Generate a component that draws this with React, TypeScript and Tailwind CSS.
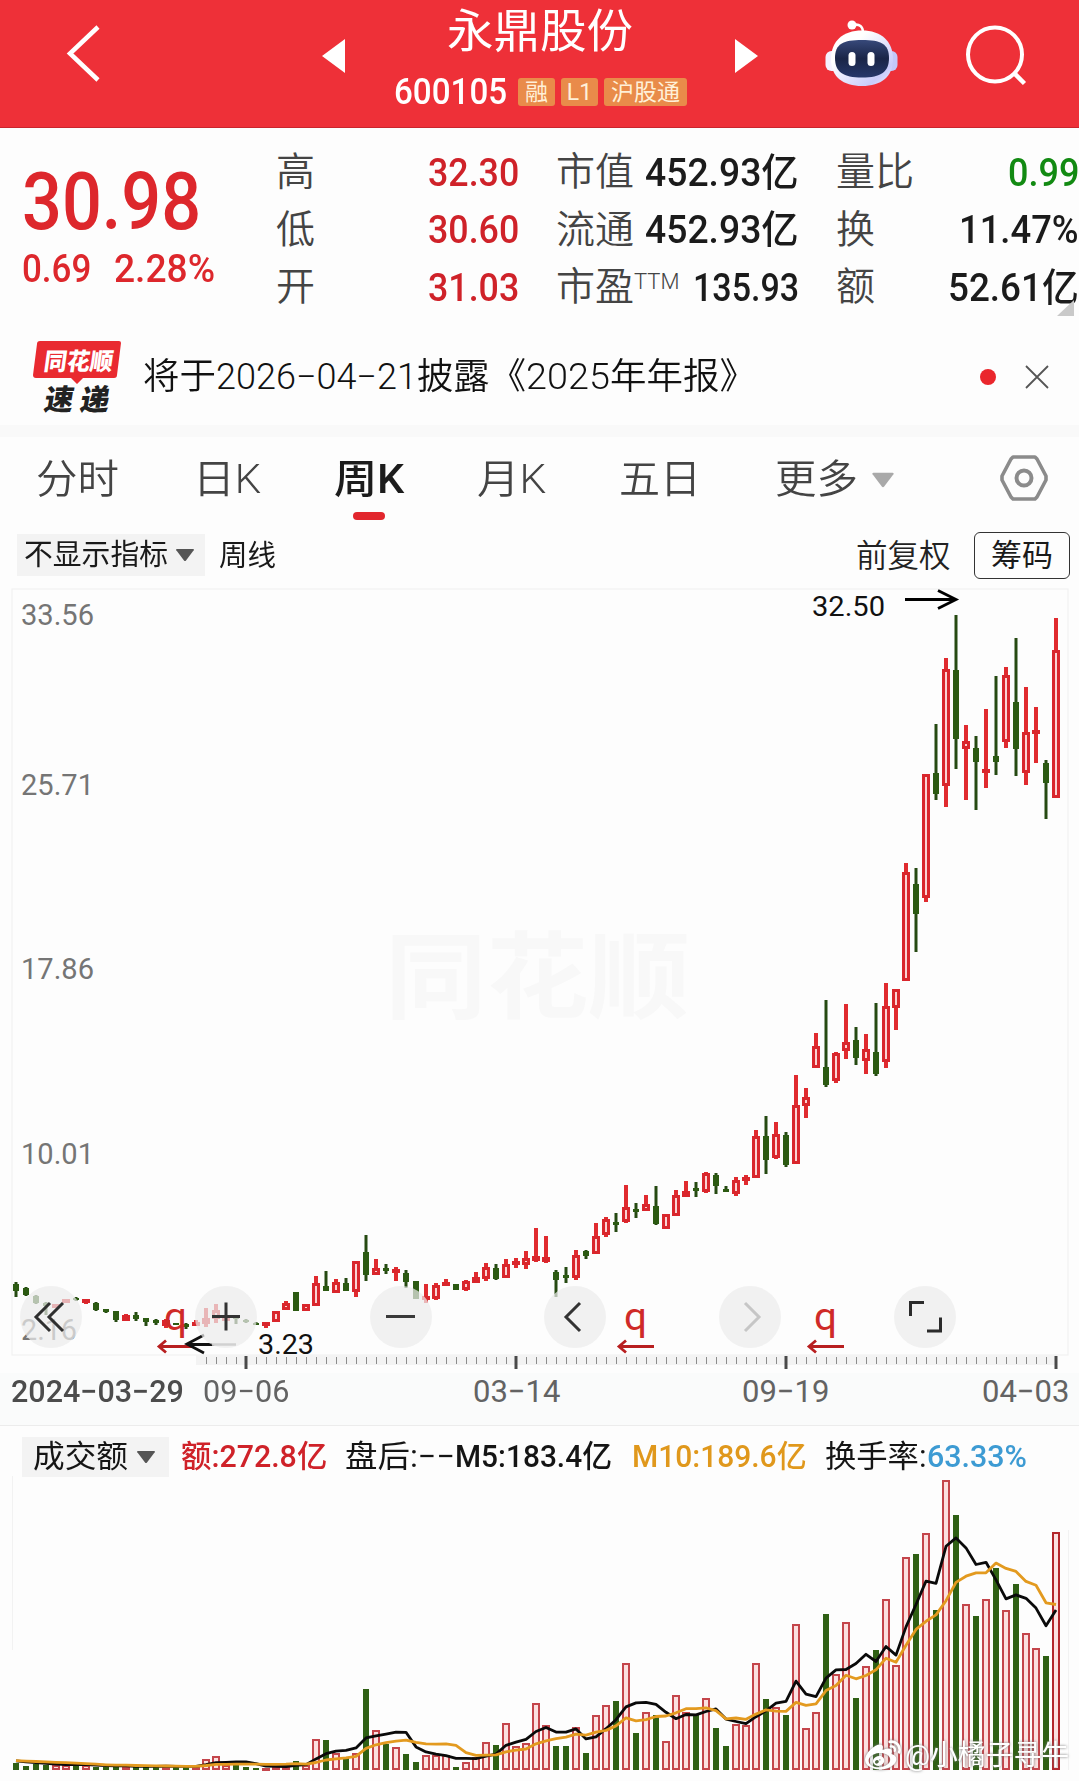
import { ReactNode, useLayoutEffect, useRef, useState } from "react";
import { FaWeibo } from "react-icons/fa";

type Candle = [up: number, high: number, top: number, bottom: number, low: number];

const RED = "#d9262c";
const GREEN = "#2c5a12";

// one entry per week: direction, high, body top, body bottom, low (chart space)
const candles: Candle[] = [
  [0, 1282, 1284, 1291, 1297], [0, 1287, 1288, 1295, 1296], [0, 1295, 1296, 1303, 1304], [0, 1302, 1303, 1306, 1315],
  [1, 1304, 1304, 1307, 1308], [1, 1299, 1299, 1303, 1303], [0, 1297, 1298, 1300, 1301], [1, 1299, 1299, 1302, 1304],
  [0, 1302, 1303, 1310, 1311], [0, 1309, 1309, 1312, 1313], [0, 1311, 1311, 1320, 1322], [1, 1314, 1315, 1321, 1321],
  [0, 1312, 1315, 1319, 1321], [0, 1318, 1318, 1322, 1326], [0, 1319, 1320, 1323, 1325], [1, 1319, 1320, 1326, 1328],
  [0, 1323, 1323, 1325, 1325], [0, 1323, 1324, 1327, 1329], [1, 1320, 1322, 1325, 1325], [1, 1308, 1318, 1324, 1327],
  [1, 1304, 1310, 1319, 1323], [1, 1316, 1317, 1318, 1320], [0, 1317, 1317, 1319, 1324], [0, 1319, 1320, 1322, 1323],
  [0, 1322, 1323, 1325, 1325], [1, 1322, 1322, 1325, 1328], [1, 1311, 1311, 1322, 1322], [1, 1301, 1303, 1310, 1310],
  [0, 1292, 1292, 1311, 1311], [1, 1304, 1304, 1311, 1311], [1, 1276, 1283, 1306, 1306], [0, 1271, 1286, 1291, 1291],
  [1, 1279, 1282, 1293, 1293], [0, 1278, 1283, 1291, 1291], [1, 1261, 1261, 1292, 1297], [0, 1235, 1252, 1275, 1281],
  [1, 1259, 1268, 1275, 1275], [0, 1264, 1268, 1271, 1274], [1, 1267, 1269, 1273, 1281], [0, 1270, 1273, 1282, 1288],
  [0, 1281, 1281, 1299, 1299], [1, 1284, 1296, 1300, 1303], [1, 1283, 1285, 1299, 1300], [1, 1279, 1282, 1286, 1286],
  [0, 1284, 1284, 1290, 1290], [1, 1280, 1281, 1290, 1291], [1, 1272, 1277, 1283, 1283], [1, 1263, 1267, 1279, 1281],
  [0, 1264, 1268, 1279, 1280], [1, 1259, 1264, 1278, 1278], [1, 1258, 1261, 1265, 1268], [1, 1251, 1258, 1265, 1269],
  [1, 1228, 1256, 1261, 1262], [1, 1236, 1257, 1262, 1263], [0, 1270, 1272, 1280, 1297], [0, 1267, 1275, 1278, 1283],
  [1, 1250, 1255, 1278, 1280], [0, 1250, 1251, 1256, 1259], [1, 1223, 1236, 1254, 1254], [1, 1217, 1219, 1235, 1237],
  [0, 1213, 1222, 1225, 1232], [1, 1185, 1207, 1222, 1223], [0, 1203, 1209, 1212, 1218], [1, 1195, 1204, 1211, 1211],
  [0, 1186, 1206, 1224, 1225], [1, 1214, 1214, 1229, 1229], [1, 1190, 1195, 1216, 1216], [1, 1181, 1191, 1197, 1197],
  [0, 1182, 1188, 1191, 1197], [1, 1172, 1173, 1192, 1193], [0, 1173, 1175, 1186, 1194], [0, 1186, 1189, 1192, 1192],
  [1, 1177, 1180, 1194, 1196], [1, 1175, 1177, 1181, 1185], [1, 1130, 1136, 1178, 1178], [0, 1116, 1136, 1160, 1174],
  [1, 1122, 1134, 1158, 1159], [0, 1132, 1135, 1165, 1167], [1, 1075, 1105, 1164, 1164], [1, 1088, 1097, 1106, 1118],
  [1, 1033, 1046, 1068, 1068], [0, 1000, 1067, 1085, 1087], [1, 1052, 1053, 1081, 1083], [1, 1004, 1042, 1051, 1059],
  [0, 1027, 1040, 1058, 1065], [1, 1034, 1049, 1061, 1074], [0, 1003, 1052, 1074, 1076], [1, 983, 1006, 1062, 1068],
  [1, 989, 989, 1008, 1030], [1, 863, 872, 981, 981], [0, 868, 884, 914, 952], [1, 774, 774, 898, 902],
  [0, 724, 773, 794, 800], [1, 658, 669, 786, 807], [0, 615, 670, 739, 769], [1, 725, 741, 749, 800],
  [0, 736, 748, 762, 810], [1, 709, 769, 773, 788], [0, 676, 756, 762, 775], [1, 667, 675, 742, 748],
  [0, 638, 702, 749, 776], [1, 687, 732, 773, 785], [1, 707, 730, 734, 763], [0, 760, 763, 783, 819],
  [1, 618, 650, 798, 798],
];

const volumes = [
  7, 4, 6, 5, 5, 5, 4, 5, 3, 3, 3, 4, 3, 3, 3, 4, 3, 3, 3, 11, 14, 5, 5, 3, 2, 2, 4, 4, 9, 5, 31, 30, 17, 13, 17, 81,
  40, 26, 23, 16, 8, 15, 15, 15, 3, 8, 13, 28, 25, 47, 24, 27, 67, 45, 24, 24, 43, 17, 55, 65, 69, 107, 37, 58, 55,
  29, 75, 58, 56, 72, 42, 24, 46, 45, 107, 71, 63, 55, 146, 42, 58, 156, 96, 148, 72, 104, 120, 171, 105, 213, 216,
  237, 160, 290, 255, 166, 154, 171, 202, 160, 186, 137, 122, 114, 238,
];

const cx = (i: number) => 16 + i * 10;

const movingAverage = (span: number) =>
  volumes
    .map((_, i) => {
      let sum = 0;
      for (let k = i - span + 1; k <= i; k++) sum += k < 0 ? 9 : volumes[k];
      return `${cx(i)},${(1769.5 - sum / span).toFixed(1)}`;
    })
    .join(" ");

// squeezes its text to a fixed width, the way the condensed numerals are set
const Fit = ({ w, className = "", children }: { w: number; className?: string; children: ReactNode }) => {
  const ref = useRef<HTMLSpanElement>(null);
  const [scale, setScale] = useState(1);
  useLayoutEffect(() => {
    if (ref.current) setScale(w / ref.current.offsetWidth);
  }, [w]);
  return (
    <span className={`inline-flex shrink-0 ${className}`} style={{ width: w }}>
      <span
        ref={ref}
        className="inline-block shrink-0 origin-left whitespace-nowrap"
        style={{ transform: `scaleX(${scale})` }}
      >
        {children}
      </span>
    </span>
  );
};

const Caret = ({ className }: { className: string }) => (
  <svg viewBox="0 0 20 14" className={className} fill="currentColor">
    <path d="M2 1h16q1.500 0 .7 1.300L11 12.500q-1 1.200-2 0L1.300 2.300Q.5 1 2 1z" />
  </svg>
);

const Robot = () => (
  <svg viewBox="0 0 74 70" className="h-[70px] w-[74px]">
    <defs>
      <linearGradient id="shell" x1="0" y1="0" x2="1" y2="1">
        <stop offset="0.3" stopColor="#fff" />
        <stop offset="0.8" stopColor="#c9ccfa" />
        <stop offset="1" stopColor="#eef" />
      </linearGradient>
      <linearGradient id="visor" x1="0" y1="0" x2="0" y2="1">
        <stop offset="0" stopColor="#37497a" />
        <stop offset="0.5" stopColor="#1a2547" />
        <stop offset="1" stopColor="#26376a" />
      </linearGradient>
    </defs>
    <path d="M28 6Q38 4 38 14" stroke="#fff" strokeWidth="2.600" fill="none" />
    <circle cx="27" cy="6" r="4.500" fill="#fff" />
    <rect x="0.500" y="32" width="14" height="20" rx="6" fill="#f4f1ff" />
    <rect x="58.500" y="32" width="14" height="20" rx="6" fill="#c3c8f8" />
    <path d="M37 11.500C56 11.500 68 22 68 40S56 67 37 67 6 58 6 40 18 11.500 37 11.500z" fill="url(#shell)" />
    <path d="M37 21C56 21 64 25 64 39S56 58.500 37 58.500 10 53 10 39 18 21 37 21z" fill="url(#visor)" />
    <rect x="23.500" y="33" width="7" height="14" rx="3.500" fill="#fff" />
    <rect x="42.500" y="33" width="7" height="14" rx="3.500" fill="#fff" />
  </svg>
);

const Header = () => (
  <header className="flex h-32 border-b border-[#c9252d] bg-[#ee3038] text-white">
    <svg viewBox="0 0 360 127" className="h-[127px] w-[360px] shrink-0">
      <path d="M98 27L70 53.500L98 80" fill="none" stroke="#fff" strokeWidth="4.500" />
      <path d="M322 56L345 39V73z" fill="#fff" />
    </svg>
    <div className="flex w-[360px] shrink-0 flex-col items-center">
      <div className="flex h-[61px] items-center">
        <Fit w={186} className="text-[46px] leading-none">永鼎股份</Fit>
      </div>
      <div className="flex h-[63px] w-[292px] items-center gap-[6px] pb-px">
        <Fit w={113} className="mr-[5px] text-[37px] font-medium leading-[60px]">600105</Fit>
        {[
          ["融", "w-[37px]"],
          ["L1", "w-[37px]"],
          ["沪股通", "w-[83px]"],
        ].map(([name, width]) => (
          <span
            key={name}
            className={`flex h-7 ${width} shrink-0 items-center justify-center rounded-[3px] bg-[#e98b4a] text-[23px] leading-none text-[#fff0d8]`}
          >
            {name}
          </span>
        ))}
      </div>
    </div>
    <svg viewBox="720 0 105 127" className="h-[127px] w-[105px] shrink-0">
      <path d="M758 56L735 39V73z" fill="#fff" />
    </svg>
    <div className="w-[140px] shrink-0 pt-[19px]">
      <Robot />
    </div>
    <svg viewBox="965 0 114 127" className="h-[127px] w-[114px] shrink-0">
      <circle cx="995" cy="54.500" r="27" fill="none" stroke="#fff" strokeWidth="4" />
      <path d="M1014 73L1024.500 83.500" stroke="#fff" strokeWidth="4.500" />
    </svg>
  </header>
);

type Stat = { label: ReactNode; value: string; w: number; color?: string };

const stats: Stat[][] = [
  [
    { label: "高", value: "32.30", w: 91, color: "text-[#cf2229]" },
    { label: "低", value: "30.60", w: 91, color: "text-[#cf2229]" },
    { label: "开", value: "31.03", w: 91, color: "text-[#cf2229]" },
  ],
  [
    { label: "市值", value: "452.93亿", w: 154 },
    { label: "流通", value: "452.93亿", w: 154 },
    { label: <>市盈<sup className="top-[-11px] text-[22px] leading-none">TTM</sup></>, value: "135.93", w: 106 },
  ],
  [
    { label: "量比", value: "0.99", w: 71, color: "text-[#128a12]" },
    { label: "换", value: "11.47%", w: 120 },
    { label: "额", value: "52.61亿", w: 131 },
  ],
];

const Quote = () => (
  <section className="flex h-[192px] pt-[16px]">
    <div className="w-[276px] shrink-0 pl-[22px] text-[#dd272c]">
      <Fit w={179} className="mt-[3px] text-[80px] font-medium leading-[110px]">30.98</Fit>
      <div className="flex gap-[23px] text-[39px] font-medium leading-[24px]">
        <Fit w={69}>0.69</Fit>
        <Fit w={101}>2.28%</Fit>
      </div>
    </div>
    {stats.map((column, i) => (
      <div key={i} className="relative mr-[37px] w-[243px] shrink-0 last:mr-0">
        {column.map(({ label, value, w, color = "text-[#1b1b1b]" }) => (
          <div key={value + w + String(i)} className="flex h-[57.500px] items-center justify-between">
            <span className="text-[39px] font-[350] leading-none text-[#444]">{label}</span>
            <Fit w={w} className={`text-[38.500px] font-medium leading-none ${color}`}>{value}</Fit>
          </div>
        ))}
        {i === 2 && <span className="absolute right-[5px] bottom-[4px] border-b-[16px] border-l-[17px] border-b-[#c9c9c9] border-l-transparent" />}
      </div>
    ))}
  </section>
);

const News = () => (
  <section className="box-content flex h-[97px] items-center border-b-12 border-[#f9f9f9] pt-[8px]">
    <div className="ml-[33px] w-[110px] shrink-0">
      <svg viewBox="33 332 90 88" className="h-[88px] w-[90px]">
        <path d="M40 340H119Q121 340 121 342L117 374Q117 377 114 377H83L77 383L71 377H36Q33 377 33 374L37 343Q37 340 40 340z" fill="#e92a30" />
        <g fontWeight="900" fontFamily="Noto Sans CJK SC, sans-serif">
          <text transform="translate(43 369) skewX(-8)" fontSize="24" textLength="69" lengthAdjust="spacingAndGlyphs" fill="#fff">同花顺</text>
          <text transform="translate(43 409) skewX(-10)" fontSize="29" textLength="65" fill="#222">速递</text>
        </g>
      </svg>
    </div>
    <p className="flex items-center text-[36px] font-[350] leading-none text-[#111]">
      <Fit w={73}>将于</Fit>
      <Fit w={201}>2026−04−21</Fit>
      <Fit w={109}>披露《</Fit>
      <Fit w={84}>2025</Fit>
      <Fit w={146}>年年报》</Fit>
    </p>
    <span className="ml-[224px] h-4 w-4 shrink-0 rounded-full bg-[#ea262c]" />
    <svg viewBox="0 0 24 24" className="ml-[29px] h-6 w-6 shrink-0" stroke="#555" strokeWidth="1.800">
      <path d="M1 1L23 23M23 1L1 23" />
    </svg>
  </section>
);

const Tabs = () => (
  <nav className="flex h-[90px] items-center pb-[5px] text-[40px] font-[350] leading-none text-[#444]">
    <Fit w={83} className="ml-[36px]">分时</Fit>
    <Fit w={68} className="ml-[74px]">日K</Fit>
    <div className="relative ml-[73px] flex">
      <Fit w={70} className="font-medium text-[#1c1c1c]">周K</Fit>
      <span className="absolute top-[52px] left-[19px] h-2 w-8 rounded-full bg-[#e2262d]" />
    </div>
    <Fit w={69} className="ml-[73px]">月K</Fit>
    <Fit w={82} className="ml-[73px]">五日</Fit>
    <Fit w={83} className="ml-[74px]">更多</Fit>
    <Caret className="ml-[13px] h-[18px] w-[24px] text-[#a9a9a9]" />
    <svg viewBox="0 0 48 46" className="mb-[3px] ml-[105px] h-[46px] w-[48px]" fill="none" stroke="#8b8b8b" strokeWidth="3.600" strokeLinejoin="round">
      <path d="M13 2H35L37 4L46 21V25L37 42L35 44H13L11 42L2 25V21L11 4z" />
      <circle cx="24" cy="23" r="7.500" strokeWidth="4" />
    </svg>
  </nav>
);

const Toolbar = () => (
  <div className="flex h-[56px] items-center leading-none text-[#1a1a1a]">
    <button className="ml-[17px] flex h-[42px] w-[188px] items-center gap-[7px] bg-[#f3f3f3] pl-[7px]">
      <Fit w={144} className="pt-px text-[29px]">不显示指标</Fit>
      <Caret className="h-[14px] w-[20px] text-[#555]" />
    </button>
    <Fit w={57} className="ml-[14px] pt-[2px] text-[29px]">周线</Fit>
    <Fit w={95} className="ml-[580px] pt-[4px] text-[31.500px] font-[350] text-[#222]">前复权</Fit>
    <button className="ml-[23px] flex h-[47px] w-[96px] items-center justify-center rounded-[6px] border-[1.500px] border-[#333]">
      <Fit w={62} className="text-[31px]">筹码</Fit>
    </button>
  </div>
);

const Mark = ({ x }: { x: number }) => (
  <g>
    <text x={x + 6} y="1330" fontSize="39" fill="#cf2a28" textLength="23" lengthAdjust="spacingAndGlyphs">q</text>
    <path d={`M${x + 36} 1346.500H${x + 1}M${x + 8} 1340.500L${x + 1} 1346.500L${x + 8} 1352.500`} fill="none" stroke="#b81f20" strokeWidth="2.800" />
  </g>
);

const axis: [string, number][] = [["33.56", 625], ["25.71", 795], ["17.86", 979], ["10.01", 1164], ["2.16", 1340]];

const controls: { name: string; d: string; color: string }[] = [
  { name: "first", d: "M31 18L17 32L31 46M44 18L30 32L44 46", color: "#2f2f2f" },
  { name: "zoom in", d: "M18 31.500H46M32 17.500V45.500", color: "#333" },
  { name: "zoom out", d: "M17 31.500H46", color: "#3a3a3a" },
  { name: "previous", d: "M37 18L23 32L37 46", color: "#333" },
  { name: "next", d: "M27 18L41 32L27 46", color: "#c6c6c6" },
  { name: "full screen", d: "M17.500 31V17.500H31M34 46H47.500V32.500", color: "#2b2b2b" },
];

const PriceChart = () => (
  <section className="relative">
    <svg viewBox="0 583 1079 790" className="block h-[790px] w-[1079px]">
      <rect x="12" y="589" width="1056" height="766" fill="none" stroke="#efefef" strokeWidth="1" />
      <text x="385" y="1011" fontSize="94" fontWeight="700" fill="#f8f8f8" textLength="305" lengthAdjust="spacingAndGlyphs">同花顺</text>
      {axis.map(([label, y]) => (
        <text key={label} x="21" y={y} fontSize="29" fill="#757575" textLength={label.length === 5 ? 73 : 56} lengthAdjust="spacingAndGlyphs">{label}</text>
      ))}
      <rect x="196" y="1355" width="861" height="10" fill="#f3f3f3" />
      {candles.map(([up, high, top, bottom, low], i) =>
        up ? (
          <g key={i}>
            <rect x={cx(i) - 2} y={high} width="4" height={low - high} fill="#e02b2f" />
            <rect
              x={cx(i) - 2.5}
              y={top + 1.5}
              width="5"
              height={Math.max(1, bottom - top - 3)}
              fill={bottom - top > 6 ? "#fbd3d3" : RED}
              stroke={RED}
              strokeWidth="3"
            />
          </g>
        ) : (
          <g key={i}>
            <rect x={cx(i) - 1.5} y={high} width="3" height={low - high} fill="#264a12" />
            <rect x={cx(i) - 3} y={top} width="6" height={bottom - top} fill={GREEN} />
          </g>
        ),
      )}
      {Array.from({ length: 86 }, (_, i) => (
        <path
          key={i}
          d={i % 27 === 4 ? `M${206 + i * 10} 1356V1369` : `M${206.5 + i * 10} 1357V1364`}
          stroke={i % 27 === 4 ? "#4a4a4a" : "#8c8c8c"}
          strokeWidth={i % 27 === 4 ? 3 : 1}
        />
      ))}
      <text x="812" y="616" fontSize="27" fill="#111" textLength="73" lengthAdjust="spacingAndGlyphs">32.50</text>
      <path d="M905 599.500H955M938 590.500L956 599.500L938 608.500" fill="none" stroke="#000" strokeWidth="2.800" />
      <Mark x={158} />
      <Mark x={618} />
      <Mark x={808} />
      <text x="258" y="1354" fontSize="27" fill="#111" textLength="56" lengthAdjust="spacingAndGlyphs">3.23</text>
      <path d="M236 1344.500H210" stroke="#8d8d8d" strokeWidth="2.500" />
      <path d="M212 1344.500H188M204 1335L187 1344L204 1353" fill="none" stroke="#111" strokeWidth="2.800" />
    </svg>
    <div className="absolute top-[702px] left-[19px] flex gap-[110.800px]">
      {controls.map(({ name, d, color }) => (
        <button key={name} aria-label={name} className="h-16 w-16 shrink-0">
          <svg viewBox="0 0 64 64" className="h-16 w-16" fill="none" stroke={color} strokeWidth="3">
            <circle cx="32" cy="32" r="31" fill="#ececec" fillOpacity="0.72" stroke="none" />
            <path d={d} />
          </svg>
        </button>
      ))}
    </div>
    <div className="flex h-[52px] bg-[#fafbfb] text-[31px] leading-[38px] text-[#636363]">
      <Fit w={173} className="ml-[11px] font-medium text-[#4c4c4c]">2024−03−29</Fit>
      <Fit w={86} className="ml-[19px]">09−06</Fit>
      <Fit w={87} className="ml-[184px]">03−14</Fit>
      <Fit w={87} className="ml-[182px]">09−19</Fit>
      <Fit w={87} className="ml-[153px]">04−03</Fit>
    </div>
  </section>
);

const VolumeChart = () => (
  <section className="relative h-[356px] border-t border-[#ececec]">
    <div className="flex h-[50px] items-center pt-[11px] text-[31px] leading-none text-[#151515]">
      <button className="ml-[22px] flex h-[40px] w-[147px] items-center gap-[8px] bg-[#f3f3f3] pl-[11px]">
        <Fit w={95}>成交额</Fit>
        <Caret className="h-[14px] w-[20px] text-[#555]" />
      </button>
      <Fit w={146} className="ml-[12px] font-medium text-[#cf2229]">额:272.8亿</Fit>
      <Fit w={110} className="ml-[18px]">盘后:−−</Fit>
      <Fit w={157} className="font-medium">M5:183.4亿</Fit>
      <Fit w={175} className="ml-[20px] font-medium text-[#e0981c]">M10:189.6亿</Fit>
      <Fit w={102} className="ml-[18px]">换手率:</Fit>
      <Fit w={100} className="font-medium text-[#3d9bd3]">63.33%</Fit>
    </div>
    <svg viewBox="0 1476 1079 305" className="block h-[305px] w-[1079px]">
      <path d="M12.500 1476V1650M1068.500 1530V1770" stroke="#f2f2f2" />
      {volumes.map((v, i) =>
        candles[i][0] ? (
          <rect
            key={i}
            x={cx(i) - 3}
            y={1771 - v}
            width="6"
            height={Math.max(1, v - 2)}
            fill="#fce0e0"
            stroke={i === 104 ? "#b3262b" : "#c4454b"}
            strokeWidth="2"
          />
        ) : (
          <rect key={i} x={cx(i) - 3} y={1770 - v} width="6" height={v} fill="#2f6014" />
        ),
      )}
      <polyline points={movingAverage(5)} fill="none" stroke="#0a0a0a" strokeWidth="2.800" strokeLinejoin="round" />
      <polyline points={movingAverage(10)} fill="none" stroke="#e39a1f" strokeWidth="2.800" strokeLinejoin="round" />
    </svg>
    <div className="absolute right-[10px] bottom-[7px] flex items-center gap-[4px] text-[28px] leading-none text-white [filter:drop-shadow(0_0_1.500px_#777)]">
      <FaWeibo className="h-9 w-9" />
      <Fit w={164}>@小橘子寻牛</Fit>
    </div>
  </section>
);

export default function App() {
  return (
    <main className="h-[1781px] w-[1079px] overflow-hidden bg-[#fdfdfd] font-[Roboto,'Noto_Sans_CJK_SC',sans-serif]">
      <Header />
      <Quote />
      <News />
      <Tabs />
      <Toolbar />
      <PriceChart />
      <VolumeChart />
    </main>
  );
}
